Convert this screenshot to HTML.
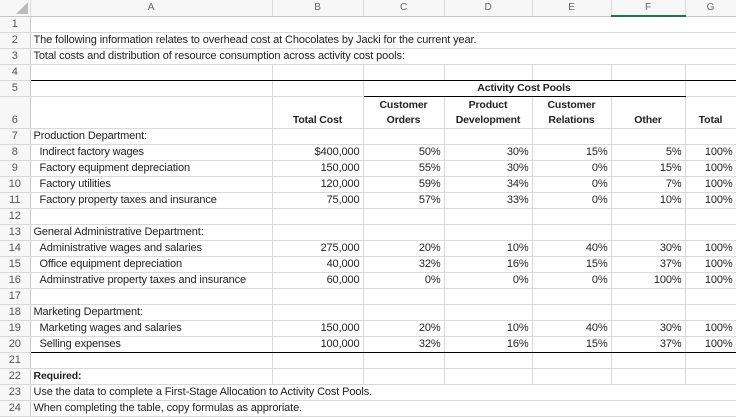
<!DOCTYPE html>
<html><head><meta charset="utf-8"><style>
*{margin:0;padding:0;box-sizing:border-box}
body{width:736px;height:417px;overflow:hidden;background:#fff;font-family:"Liberation Sans",sans-serif;font-size:11px;letter-spacing:-0.12px;color:#222}
table{border-collapse:collapse;table-layout:fixed;position:absolute;left:0;top:0;width:736px}
td{height:16px;line-height:15px;border-right:1px solid #d9d9d9;border-bottom:1px solid #d9d9d9;white-space:nowrap;overflow:visible;padding:0 3px;vertical-align:bottom}
tr.h td{background:#f7f7f7;text-align:center;color:#666;border-right:1px solid #dadada;border-bottom:1px solid #c8c8c8;vertical-align:middle;font-size:10px}
td.rn{background:#f7f7f7;color:#555;text-align:center;padding:0;border-right:1px solid #c8c8c8}
td.sel{background:#e1e1e1;color:#217346;border-bottom:2px solid #217346 !important}
.r{text-align:right}
.c{text-align:center}
.b{font-weight:bold;font-size:10.5px}
.nv{border-right-color:transparent}
.in{padding-left:9px}
.bb{border-bottom:1px solid #000 !important}
tr.t td{height:32px}
</style></head><body>
<table>
<colgroup><col style="width:30px"><col style="width:242px"><col style="width:91px"><col style="width:81px"><col style="width:88px"><col style="width:79px"><col style="width:74px"><col style="width:51px"></colgroup>
<tr class="h"><td style="position:relative"><div style="position:absolute;right:2px;bottom:2px;width:0;height:0;border-left:12px solid transparent;border-bottom:12px solid #bbb"></div></td><td>A</td><td>B</td><td>C</td><td>D</td><td>E</td><td class="sel">F</td><td>G</td></tr>
<tr><td class="rn">1</td><td class="nv"></td><td class="nv"></td><td class="nv"></td><td class="nv"></td><td class="nv"></td><td class="nv"></td><td class="nv"></td></tr>
<tr><td class="rn">2</td><td class="nv">The following information relates to overhead cost at Chocolates by Jacki for the current year.</td><td class="nv"></td><td class="nv"></td><td class="nv"></td><td class="nv"></td><td class="nv"></td><td class="nv"></td></tr>
<tr><td class="rn">3</td><td class="nv">Total costs and distribution of resource consumption across activity cost pools:</td><td class="nv"></td><td class="nv"></td><td class="nv"></td><td class="nv"></td><td class="nv"></td><td class="nv"></td></tr>
<tr><td class="rn">4</td><td class="bb"></td><td class="bb"></td><td class="bb"></td><td class="bb"></td><td class="bb"></td><td class="bb"></td><td class="bb"></td></tr>
<tr><td class="rn">5</td><td></td><td></td><td colspan="4" class="c b bb">Activity Cost Pools</td><td></td></tr>
<tr class="t"><td class="rn">6</td><td></td><td class="c b">Total Cost</td><td class="c b">Customer<br>Orders</td><td class="c b">Product<br>Development</td><td class="c b">Customer<br>Relations</td><td class="c b">Other</td><td class="c b">Total</td></tr>
<tr><td class="rn">7</td><td>Production Department:</td><td></td><td></td><td></td><td></td><td></td><td></td></tr>
<tr><td class="rn">8</td><td class="in">Indirect factory wages</td><td class="r">$400,000</td><td class="r">50%</td><td class="r">30%</td><td class="r">15%</td><td class="r">5%</td><td class="r">100%</td></tr>
<tr><td class="rn">9</td><td class="in">Factory equipment depreciation</td><td class="r">150,000</td><td class="r">55%</td><td class="r">30%</td><td class="r">0%</td><td class="r">15%</td><td class="r">100%</td></tr>
<tr><td class="rn">10</td><td class="in">Factory utilities</td><td class="r">120,000</td><td class="r">59%</td><td class="r">34%</td><td class="r">0%</td><td class="r">7%</td><td class="r">100%</td></tr>
<tr><td class="rn">11</td><td class="in">Factory property taxes and insurance</td><td class="r">75,000</td><td class="r">57%</td><td class="r">33%</td><td class="r">0%</td><td class="r">10%</td><td class="r">100%</td></tr>
<tr><td class="rn">12</td><td></td><td></td><td></td><td></td><td></td><td></td><td></td></tr>
<tr><td class="rn">13</td><td>General Administrative Department:</td><td></td><td></td><td></td><td></td><td></td><td></td></tr>
<tr><td class="rn">14</td><td class="in">Administrative wages and salaries</td><td class="r">275,000</td><td class="r">20%</td><td class="r">10%</td><td class="r">40%</td><td class="r">30%</td><td class="r">100%</td></tr>
<tr><td class="rn">15</td><td class="in">Office equipment depreciation</td><td class="r">40,000</td><td class="r">32%</td><td class="r">16%</td><td class="r">15%</td><td class="r">37%</td><td class="r">100%</td></tr>
<tr><td class="rn">16</td><td class="in">Adminstrative property taxes and insurance</td><td class="r">60,000</td><td class="r">0%</td><td class="r">0%</td><td class="r">0%</td><td class="r">100%</td><td class="r">100%</td></tr>
<tr><td class="rn">17</td><td></td><td></td><td></td><td></td><td></td><td></td><td></td></tr>
<tr><td class="rn">18</td><td>Marketing Department:</td><td></td><td></td><td></td><td></td><td></td><td></td></tr>
<tr><td class="rn">19</td><td class="in">Marketing wages and salaries</td><td class="r">150,000</td><td class="r">20%</td><td class="r">10%</td><td class="r">40%</td><td class="r">30%</td><td class="r">100%</td></tr>
<tr><td class="rn">20</td><td class="in bb">Selling expenses</td><td class="r bb">100,000</td><td class="r bb">32%</td><td class="r bb">16%</td><td class="r bb">15%</td><td class="r bb">37%</td><td class="r bb">100%</td></tr>
<tr><td class="rn">21</td><td></td><td></td><td></td><td></td><td></td><td></td><td></td></tr>
<tr><td class="rn">22</td><td class="b">Required:</td><td></td><td></td><td></td><td></td><td></td><td></td></tr>
<tr><td class="rn">23</td><td class="nv">Use the data to complete a First-Stage Allocation to Activity Cost Pools.</td><td class="nv"></td><td class="nv"></td><td class="nv"></td><td class="nv"></td><td class="nv"></td><td class="nv"></td></tr>
<tr><td class="rn">24</td><td class="nv">When completing the table, copy formulas as approriate.</td><td class="nv"></td><td class="nv"></td><td class="nv"></td><td class="nv"></td><td class="nv"></td><td class="nv"></td></tr>
</table>
</body></html>
